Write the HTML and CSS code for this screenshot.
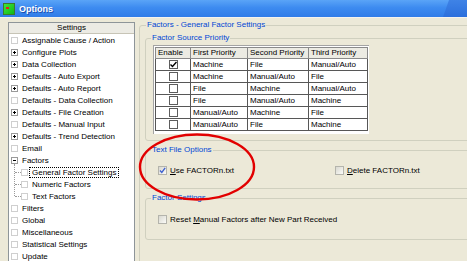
FILE: index.html
```html
<!DOCTYPE html>
<html lang="en">

<head>
    <meta charset="UTF-8">
    <title>Options</title>
    <link rel="stylesheet" href="styles.css">
</head>

<body>
    <div class="titlebar">
        <span class="app-icon"><span class="app-icon-mark"></span></span>
        <span class="title">Options</span>
    </div>
    <div class="client">
        <div class="tree">
            <div class="tree-head">Settings</div>
            <div class="tree-item"><span class="node-box"></span>Assignable Cause / Action</div>
            <div class="tree-item"><span class="node-box plus"></span>Configure Plots</div>
            <div class="tree-item"><span class="node-box plus"></span>Data Collection</div>
            <div class="tree-item"><span class="node-box plus"></span>Defaults - Auto Export</div>
            <div class="tree-item"><span class="node-box plus"></span>Defaults - Auto Report</div>
            <div class="tree-item"><span class="node-box"></span>Defaults - Data Collection</div>
            <div class="tree-item"><span class="node-box plus"></span>Defaults - File Creation</div>
            <div class="tree-item"><span class="node-box"></span>Defaults - Manual Input</div>
            <div class="tree-item"><span class="node-box plus"></span>Defaults - Trend Detection</div>
            <div class="tree-item"><span class="node-box"></span>Email</div>
            <div class="tree-item"><span class="node-box minus"></span>Factors</div>
            <div class="sub">
                <div class="tree-item child"><span class="node-box"></span><span class="selected">General Factor Settings</span></div>
                <div class="tree-item child"><span class="node-box"></span>Numeric Factors</div>
                <div class="tree-item child"><span class="node-box"></span>Text Factors</div>
            </div>
            <div class="tree-item"><span class="node-box"></span>Filters</div>
            <div class="tree-item"><span class="node-box"></span>Global</div>
            <div class="tree-item"><span class="node-box"></span>Miscellaneous</div>
            <div class="tree-item"><span class="node-box"></span>Statistical Settings</div>
            <div class="tree-item"><span class="node-box"></span>Update</div>
        </div>

        <div class="panel">
            <fieldset class="group-outer">
                <legend>Factors - General Factor Settings</legend>

                <fieldset class="group">
                    <legend>Factor Source Priority</legend>
                    <div class="grid">
                        <table>
                            <colgroup>
                                <col class="c-enable">
                                <col class="c-first">
                                <col class="c-second">
                                <col class="c-third">
                            </colgroup>
                            <thead>
                                <tr><th>Enable</th><th>First Priority</th><th>Second Priority</th><th>Third Priority</th></tr>
                            </thead>
                            <tbody>
                                <tr><td class="center"><span class="cell-check checked"><svg width="7" height="7" viewBox="0 0 7 7"><path d="M0.5 3.5 L2.5 5.5 L6.5 1" fill="none" stroke="#000" stroke-width="1.4"/></svg></span></td><td>Machine</td><td>File</td><td>Manual/Auto</td></tr>
                                <tr><td class="center"><span class="cell-check"></span></td><td>Machine</td><td>Manual/Auto</td><td>File</td></tr>
                                <tr><td class="center"><span class="cell-check"></span></td><td>File</td><td>Machine</td><td>Manual/Auto</td></tr>
                                <tr><td class="center"><span class="cell-check"></span></td><td>File</td><td>Manual/Auto</td><td>Machine</td></tr>
                                <tr><td class="center"><span class="cell-check"></span></td><td>Manual/Auto</td><td>Machine</td><td>File</td></tr>
                                <tr><td class="center"><span class="cell-check"></span></td><td>Manual/Auto</td><td>File</td><td>Machine</td></tr>
                            </tbody>
                        </table>
                    </div>
                </fieldset>

                <fieldset class="group group-text">
                    <legend>Text File Options</legend>
                    <div class="option-row">
                        <label class="option option-wide"><span class="xp-check"><svg width="7" height="7" viewBox="0 0 7 7"><path d="M1 3.5 L2.8 5.5 L6.2 0.8" fill="none" stroke="#3b5fd0" stroke-width="1.3"/></svg></span><span><u>U</u>se FACTORn.txt</span></label>
                        <label class="option"><span class="xp-check"></span><span><u>D</u>elete FACTORn.txt</span></label>
                    </div>
                </fieldset>

                <fieldset class="group group-factor">
                    <legend>Factor Settings</legend>
                    <div class="option-row">
                        <label class="option"><span class="xp-check"></span><span>Reset <u>M</u>anual Factors after New Part Received</span></label>
                    </div>
                </fieldset>
            </fieldset>
        </div>
    </div>

    <svg class="annotation" width="467" height="261" viewBox="0 0 467 261">
        <ellipse cx="197" cy="167" rx="57" ry="32.5" fill="none" stroke="#e20000" stroke-width="2.4"/>
    </svg>
</body>

</html>
```

FILE: styles.css
```css
body {
    margin: 0;
    width: 467px;
    height: 261px;
    overflow: hidden;
    position: relative;
    background-color: #ece9d8;
    font-family: "Liberation Sans", Arial, sans-serif;
    font-size: 8px;
    color: #000;
}

.titlebar {
    height: 17px;
    display: flex;
    align-items: center;
    padding-left: 3px;
    position: relative;
    background: linear-gradient(#5aa4f7, #3d8bf0 45%, #307ce8);
    border-bottom: 1px solid #f4f3ee;
}

.titlebar::after {
    content: "";
    position: absolute;
    right: 0;
    top: 0;
    width: 24px;
    height: 17px;
    background: linear-gradient(#3f83e6, #2b6fdc);
    clip-path: polygon(6px 0, 100% 0, 100% 100%, 0 100%);
}

.app-icon {
    width: 12px;
    height: 12px;
    box-sizing: border-box;
    border: 1px solid #3b7a2a;
    background: linear-gradient(135deg, #3fe43a, #10b818);
    position: relative;
}

.app-icon-mark {
    position: absolute;
    left: 2px;
    top: 3px;
    width: 3px;
    height: 2px;
    background-color: #e8201a;
}

.title {
    margin-left: 4px;
    color: #fff;
    font-weight: bold;
    font-size: 9px;
    text-shadow: 1px 1px 0 #1d4fb0;
}

.client {
    display: flex;
    padding-top: 4px;
}

/* settings tree */
.tree {
    flex: none;
    margin-left: 8px;
    width: 125px;
    height: 260px;
    border: 1px solid #8e9599;
    background-color: #fff;
}

.tree-head {
    height: 10px;
    line-height: 10px;
    text-align: center;
    background-color: #ecebe4;
    border-bottom: 1px solid #c7c4b6;
}

.tree-item {
    height: 12px;
    display: flex;
    align-items: center;
    gap: 4px;
    padding-left: 2px;
    white-space: nowrap;
}

.node-box {
    flex: none;
    width: 7px;
    height: 7px;
    box-sizing: border-box;
    border: 1px solid #cfcfcf;
    background-color: #fff;
}

.node-box.plus,
.node-box.minus {
    border-color: #9a9a9a;
    background: linear-gradient(#000, #000) center / 3px 1px no-repeat, #fff;
}

.node-box.plus {
    background: linear-gradient(#000, #000) center / 3px 1px no-repeat,
        linear-gradient(#000, #000) center / 1px 3px no-repeat, #fff;
}

.sub {
    position: relative;
}

.sub::before {
    content: "";
    position: absolute;
    left: 5px;
    top: -2px;
    height: 32px;
    border-left: 1px dotted #9a9a9a;
}

.tree-item.child {
    padding-left: 12px;
    position: relative;
}

.tree-item.child::before {
    content: "";
    position: absolute;
    left: 6px;
    top: 6px;
    width: 6px;
    border-top: 1px dotted #9a9a9a;
}

.selected {
    margin-left: -3px;
    padding: 0 2px;
    line-height: 9px;
    border: 1px dotted #000;
}

/* right panel */
.panel {
    margin-left: 4px;
    margin-top: -2px;
}

fieldset {
    margin: 0;
    min-width: 0;
    border: 1px solid #d0d0bf;
    border-radius: 3px;
}

legend {
    padding: 0 1px;
    line-height: 10px;
    color: #0046d5;
}

.group-outer {
    width: 340px;
    height: 260px;
    padding: 3px 0 0 5px;
}

.group-outer > legend {
    margin-left: 1px;
}

.group {
    padding: 2px 0 6px 7px;
    margin-bottom: 4px;
}

.group > legend {
    margin-left: -2px;
}

.group-text {
    padding-top: 9px;
    padding-bottom: 12px;
    margin-bottom: 4px;
}

.group-factor {
    padding-top: 10px;
    padding-bottom: 14px;
}

.grid {
    width: 214px;
    height: 87px;
    padding: 1px 0 0 1px;
    background-color: #fff;
    border-left: 1px solid #a3a3a3;
    border-top: 1px solid #a3a3a3;
}

table {
    border-collapse: collapse;
    table-layout: fixed;
    width: 212px;
}

.c-enable { width: 35px; }
.c-first { width: 57px; }
.c-second { width: 61px; }
.c-third { width: 59px; }

th,
td {
    border: 1px solid #575757;
    padding: 0 2px;
    text-align: left;
    font-weight: normal;
    white-space: nowrap;
    overflow: hidden;
}

th {
    height: 10px;
    line-height: 10px;
    background-color: #ecebe3;
    border-color: #8a8a8a;
}

td {
    height: 11px;
    line-height: 11px;
}

td.center {
    text-align: center;
}

.cell-check {
    display: inline-flex;
    align-items: center;
    justify-content: center;
    width: 9px;
    height: 9px;
    box-sizing: border-box;
    border: 1px solid #5d5d5d;
    background-color: #fff;
    vertical-align: middle;
}

.option-row {
    display: flex;
    padding-left: 5px;
}

.option {
    height: 12px;
    display: flex;
    align-items: center;
    gap: 3px;
    white-space: nowrap;
}

.option-wide {
    width: 177px;
}

.xp-check {
    flex: none;
    width: 9px;
    height: 9px;
    box-sizing: border-box;
    display: flex;
    align-items: center;
    justify-content: center;
    border: 1px solid #b4b4ac;
    background: linear-gradient(135deg, #d9d8d0, #fbfbf8);
}

.annotation {
    position: absolute;
    left: 0;
    top: 0;
    pointer-events: none;
}
```
